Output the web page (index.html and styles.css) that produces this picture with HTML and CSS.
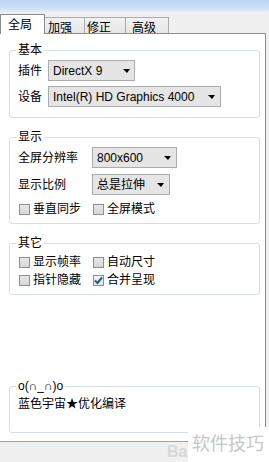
FILE: index.html
```html
<!DOCTYPE html>
<html lang="zh">
<head>
  <meta charset="UTF-8">
  <title>设置</title>
  <link rel="stylesheet" href="styles.css">
</head>
<body>

  <div class="titlebar"></div>

  <div class="tabs">
    <div class="tab active">全局</div>
    <div class="tab t2">加强</div>
    <div class="tab t3">修正</div>
    <div class="tab t4">高级</div>
  </div>

  <div class="panel">
    <fieldset class="group basic">
      <legend>基本</legend>
      <div class="row">
        <span class="label short">插件</span>
        <div class="select w-plugin"><span>DirectX 9</span><i class="arrow"></i></div>
      </div>
      <div class="row">
        <span class="label short">设备</span>
        <div class="select w-device"><span>Intel(R) HD Graphics 4000</span><i class="arrow"></i></div>
      </div>
    </fieldset>

    <fieldset class="group display">
      <legend>显示</legend>
      <div class="row">
        <span class="label long">全屏分辨率</span>
        <div class="select w-res"><span>800x600</span><i class="arrow"></i></div>
      </div>
      <div class="row">
        <span class="label long">显示比例</span>
        <div class="select w-ratio"><span>总是拉伸</span><i class="arrow"></i></div>
      </div>
      <div class="checks">
        <label class="check"><span class="box"></span>垂直同步</label>
        <label class="check"><span class="box"></span>全屏模式</label>
      </div>
    </fieldset>

    <fieldset class="group other">
      <legend>其它</legend>
      <div class="checks">
        <label class="check"><span class="box"></span>显示帧率</label>
        <label class="check"><span class="box"></span>自动尺寸</label>
        <label class="check"><span class="box"></span>指针隐藏</label>
        <label class="check"><span class="box checked"><svg width="9" height="9" viewBox="0 0 9 9"><path d="M1 4.5 L3.5 7 L8 1.5" fill="none" stroke="#1d5f86" stroke-width="2"/></svg></span>合并呈现</label>
      </div>
    </fieldset>

    <fieldset class="group about">
      <legend>o(∩_∩)o</legend>
      <div class="credit">蓝色宇宙★优化编译</div>
    </fieldset>
  </div>

  <div class="logo">Ba</div>
  <div class="watermark">软件技巧</div>

</body>
</html>
```

FILE: styles.css
```css
body {
  margin: 0;
  height: 462px;
  overflow: hidden;
  position: relative;
  background: #f0f0f0;
  font-family: "Liberation Sans", "Noto Sans CJK SC", sans-serif;
  font-size: 12px;
  line-height: 14px;
  color: #000;
}

.titlebar {
  height: 12px;
  background: linear-gradient(#bcd5f1, #cadff5 60%, #e4ecf5);
}

/* tab strip */
.tabs {
  display: flex;
  align-items: flex-start;
  height: 20px;
  margin-top: 2px;
  margin-bottom: -1px;
  position: relative;
  z-index: 1;
}

.tab {
  box-sizing: border-box;
  height: 16px;
  margin-top: 3px;
  padding-top: 3px;
  border-top: 1px solid #acacac;
  border-right: 1px solid #acacac;
  background: linear-gradient(#f2f2f2, #e6e6e6);
}

.tab.active {
  height: 20px;
  margin-top: 0;
  width: 45px;
  padding: 3px 0 0 7px;
  border: 1px solid #898c95;
  border-bottom: none;
  background: #fff;
}

.t2 { width: 40px; padding-left: 3px; }
.t3 { width: 41px; padding-left: 2px; }
.t4 { width: 43px; padding-left: 6px; }

/* page body */
.panel {
  box-sizing: border-box;
  width: 267px;
  height: 409px;
  margin-left: -1px;
  padding: 9px 5px 0 9px;
  border: 1px solid #898c95;
  border-bottom-color: #a0a0a0;
  background: #fff;
}

.group {
  margin: 0;
  min-width: 0;
  padding: 3px 8px 10px;
  border: 1px solid #d5dfe5;
  border-radius: 3px;
}

.group legend {
  padding: 0 2px;
  margin-left: -2px;
  line-height: 14px;
}

.display { margin-top: 12px; padding-bottom: 7px; }
.other { margin-top: 12px; padding: 5px 8px 7px; }
.about { margin-top: 84px; padding: 4px 8px 21px; }

.row {
  display: flex;
  align-items: center;
  height: 21px;
}

.row + .row { margin-top: 5px; }
.display .row + .row { margin-top: 6px; }

.label.short { width: 30px; }
.label.long { width: 74px; }

.select {
  box-sizing: border-box;
  height: 21px;
  display: flex;
  align-items: center;
  justify-content: space-between;
  padding: 0 4px 0 4px;
  border: 1px solid #acacac;
  background: #e5e5e5;
}

.w-plugin { width: 87px; }
.w-device { width: 173px; padding-right: 5px; }
.w-res { width: 85px; padding-right: 5px; }
.w-ratio { width: 78px; padding-right: 5px; }

.arrow {
  width: 0;
  height: 0;
  border-left: 4px solid transparent;
  border-right: 3px solid transparent;
  border-top: 4px solid #000;
}

.checks {
  display: grid;
  grid-template-columns: 74px auto;
  row-gap: 4px;
}

.display .checks { margin-top: 7px; }

.check {
  display: flex;
  align-items: center;
  height: 14px;
}

.box {
  box-sizing: border-box;
  width: 11px;
  height: 11px;
  margin: 0 3px 0 1px;
  border: 1px solid #8f8f8f;
  background: linear-gradient(#e8e8e8, #d6d6d6);
  display: flex;
  align-items: center;
  justify-content: center;
}

.box.checked { background: linear-gradient(#f4f4f4, #e2e2e2); }

.credit { height: 14px; }

/* site watermark laid over the corner */
.logo {
  position: absolute;
  left: 167px;
  top: 443px;
  font-size: 16px;
  font-weight: bold;
  line-height: 18px;
  color: #d8d8d8;
}

.watermark {
  position: absolute;
  right: 0;
  bottom: 0;
  width: 81px;
  height: 35px;
  padding: 5px 0 0 4px;
  box-sizing: border-box;
  background: #fff;
  font-family: "Noto Sans CJK SC", sans-serif;
  font-size: 18px;
  line-height: 20px;
  color: #c6c6c6;
}
```
